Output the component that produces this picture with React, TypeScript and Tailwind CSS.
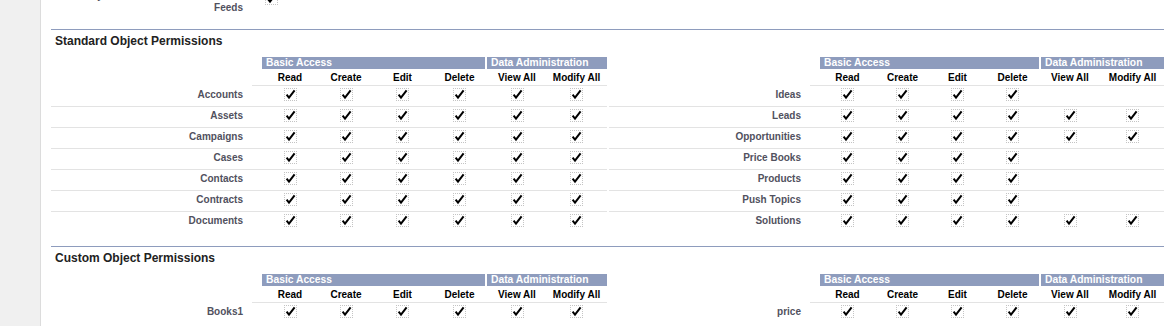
import React from 'react';

type PermRow = { label: string; perms: boolean[] };

const ALL = [true, true, true, true, true, true];
const BASIC = [true, true, true, true, false, false];

const standardLeft: PermRow[] = [
  { label: 'Accounts', perms: ALL },
  { label: 'Assets', perms: ALL },
  { label: 'Campaigns', perms: ALL },
  { label: 'Cases', perms: ALL },
  { label: 'Contacts', perms: ALL },
  { label: 'Contracts', perms: ALL },
  { label: 'Documents', perms: ALL },
];

const standardRight: PermRow[] = [
  { label: 'Ideas', perms: BASIC },
  { label: 'Leads', perms: ALL },
  { label: 'Opportunities', perms: ALL },
  { label: 'Price Books', perms: BASIC },
  { label: 'Products', perms: BASIC },
  { label: 'Push Topics', perms: BASIC },
  { label: 'Solutions', perms: ALL },
];

const HEADERS = ['Read', 'Create', 'Edit', 'Delete', 'View All', 'Modify All'];

function Checked() {
  return (
    <span className="inline-flex w-[13px] h-[13px] border border-dotted border-[#c4c4c4] items-center justify-center">
      <svg width="11" height="11" viewBox="0 0 11 11">
        <path d="M1.6 5.6 L4 8.6 L9.6 1.4" fill="none" stroke="#000" strokeWidth="2" strokeLinejoin="miter" />
      </svg>
    </span>
  );
}

function PermTable({ side, rows }: { side: 'left' | 'right'; rows: PermRow[] }) {
  // column widths differ a little between the two halves, as in the original page
  const cols =
    side === 'left'
      ? 'grid-cols-[201px_10px_56px_56px_57px_57px_58px_61px]'
      : 'grid-cols-[201px_10px_55px_55px_55px_55px_60px_65px]';

  return (
    <div className="w-[556px] shrink-0">
      {/* group bar */}
      <div className="flex h-[12px] text-white text-[10.3px] font-bold leading-[12px]">
        <div className="w-[211px] shrink-0" />
        <div className={`${side === 'left' ? 'w-[223px]' : 'w-[219px]'} shrink-0 bg-[#8e9cbd] pl-[4px]`}>Basic Access</div>
        <div className="ml-[2px] flex-1 bg-[#8e9cbd] pl-[4px] whitespace-nowrap">Data Administration</div>
      </div>

      {/* column headers */}
      <div className={`grid ${cols} h-[17px] text-[10px] font-bold text-black`}>
        <div />
        <div className="border-b border-[#e3e3e3]" />
        {HEADERS.map((h) => (
          <div key={h} className="flex items-center justify-center border-b border-[#e3e3e3] whitespace-nowrap">
            {h}
          </div>
        ))}
      </div>

      {rows.map((row, i) => (
        <div
          key={row.label}
          className={`grid ${cols} ${i < rows.length - 1 ? 'h-[21px] border-b border-[#e3e3e3]' : 'h-[20px]'}`}
        >
          <div className="text-right pr-[9px] pt-[2.5px] leading-[12px] text-[10px] font-bold text-[#51515e] whitespace-nowrap">
            {row.label}
          </div>
          <div />
          {row.perms.map((p, k) => (
            <div key={k} className="flex justify-center pt-[2px]">
              {p && <Checked />}
            </div>
          ))}
        </div>
      ))}
    </div>
  );
}

function Section({ title, left, right }: { title: string; left: PermRow[]; right: PermRow[] }) {
  return (
    <div className="border-t border-[#8e9cbd] pt-[4px] pb-[14px]">
      <h3 className="h-[14px] leading-[14px] mb-[9px] pl-[4px] text-[12px] font-bold text-[#222]">{title}</h3>
      <div className="flex gap-[2px]">
        <PermTable side="left" rows={left} />
        <PermTable side="right" rows={right} />
      </div>
    </div>
  );
}

export default function App() {
  return (
    <div className="flex w-[1164px] h-[326px] overflow-hidden bg-white font-['Liberation_Sans',Arial,sans-serif]">
      <div className="w-[41px] shrink-0 bg-[#f0f0f0] border-r border-[#dcdcdc]" />

      <div className="flex-1 pl-[10px] overflow-hidden">
        {/* tail of the previous section, cut by the top edge */}
        <div className="-mt-[10px] h-[39px] flex">
          <div className="w-[201px] shrink-0 pr-[9px] text-right text-[10px] leading-[12px] font-bold text-[#51515e]">
            <div className="whitespace-nowrap">Activity on All Records in the Chatter</div>
            <div>Feeds</div>
          </div>
          <div className="pl-[13px] -mt-[3px]">
            <Checked />
          </div>
        </div>

        <Section title="Standard Object Permissions" left={standardLeft} right={standardRight} />
        <Section
          title="Custom Object Permissions"
          left={[{ label: 'Books1', perms: ALL }]}
          right={[{ label: 'price', perms: ALL }]}
        />
      </div>
    </div>
  );
}
